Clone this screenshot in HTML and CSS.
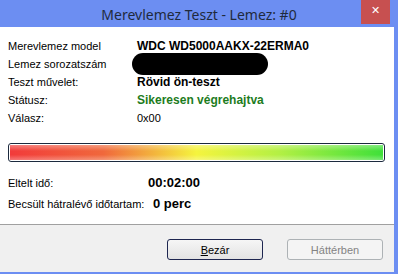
FILE: index.html
```html
<!DOCTYPE html>
<html lang="hu">
<head>
  <meta charset="UTF-8" />
  <title>Merevlemez Teszt - Lemez: #0</title>
  <link rel="stylesheet" href="styles.css">
</head>
<body>

  <div class="window">
    <div class="titlebar">
      <span class="title">Merevlemez Teszt - Lemez: #0</span>
      <span class="close">&#x2715;</span>
    </div>

    <div class="content">
      <div class="info">
        <div class="label">Merevlemez model</div>
        <div class="value bold">WDC WD5000AAKX-22ERMA0</div>
        <div class="label">Lemez sorozatszám</div>
        <div class="value"><span class="redacted"></span></div>
        <div class="label">Teszt művelet:</div>
        <div class="value bold">Rövid ön-teszt</div>
        <div class="label">Státusz:</div>
        <div class="value bold ok">Sikeresen végrehajtva</div>
        <div class="label">Válasz:</div>
        <div class="value">0x00</div>
      </div>

      <div class="progress">
        <div class="fill"></div>
      </div>

      <div class="times">
        <div class="label">Eltelt idő:</div>
        <div class="time">00:02:00</div>
        <div class="label">Becsült hátralévő időtartam:</div>
        <div class="time shift">0 perc</div>
      </div>
    </div>

    <div class="footer">
      <button class="btn default"><u>B</u>ezár</button>
      <button class="btn" disabled>Háttérben</button>
    </div>
  </div>

</body>
</html>
```

FILE: styles.css
```css
body {
  margin: 0;
  font-family: "Liberation Sans", Arial, sans-serif;
  font-size: 11px;
  color: #000;
}

.window {
  width: 398px;
  height: 274px;
  background-color: #6c8ef2;
  display: flex;
  flex-direction: column;
  position: relative;
}

.titlebar {
  height: 27px;
  flex-shrink: 0;
  text-align: center;
}

.title {
  font-family: "Noto Sans", "Open Sans", sans-serif;
  font-size: 14px;
  line-height: 30px;
  color: #1f2a3d;
}

.close {
  position: absolute;
  top: 0;
  right: 8px;
  width: 29px;
  height: 24px;
  background-color: #c75050;
  color: #fff;
  font-family: "DejaVu Sans", sans-serif;
  font-size: 11px;
  font-weight: bold;
  line-height: 22px;
  text-align: center;
}

.content {
  background: #fff;
  margin-right: 4px;
  flex-grow: 1;
  padding-top: 10px;
}

.info {
  display: grid;
  grid-template-columns: 129px 1fr;
  grid-auto-rows: 18px;
  padding-left: 8px;
  align-items: center;
}

.bold {
  font-weight: bold;
  font-size: 12px;
}

.ok {
  color: #1d7c1d;
}

.redacted {
  display: block;
  width: 136px;
  height: 22px;
  margin: -2px 0 -2px -5px;
  background: #000;
  border-radius: 11px;
}

.progress {
  margin: 16px 9px 0 8px;
  height: 15px;
  padding: 1px;
  border: 1px solid #1c2a3e;
  border-radius: 3px;
}

.fill {
  height: 100%;
  background:
    linear-gradient(to bottom, rgba(255,255,255,0.35), rgba(255,255,255,0) 40%, rgba(255,255,255,0) 65%, rgba(255,255,255,0.3)),
    linear-gradient(to right, #f23b3b, #f0683c 25%, #f5f43e 50%, #b4f044 72%, #3fe03a);
}

.times {
  display: grid;
  grid-template-columns: 140px 1fr;
  grid-auto-rows: 21px;
  align-items: center;
  padding-left: 8px;
  margin-top: 10px;
}

.time {
  font-weight: bold;
  font-size: 13px;
}

.shift {
  padding-left: 5px;
}

.footer {
  background: #f0f0f0;
  border-top: 1px solid #a0a0a0;
  margin: 0 4px 2px 0;
  height: 48px;
  flex-shrink: 0;
  display: flex;
  justify-content: flex-end;
  align-items: flex-start;
  gap: 24px;
  padding: 14px 11px 0 0;
  box-sizing: border-box;
}

.btn {
  width: 96px;
  height: 21px;
  font-family: "Liberation Sans", Arial, sans-serif;
  font-size: 11px;
  border: 1px solid #adb2b5;
  border-radius: 3px;
  background: #f4f4f4;
  color: #838383;
  padding: 0;
}

.btn.default {
  border-color: #1e2650;
  background: linear-gradient(to bottom, #f6f6f6, #e3e3e3);
  color: #000;
}
```
